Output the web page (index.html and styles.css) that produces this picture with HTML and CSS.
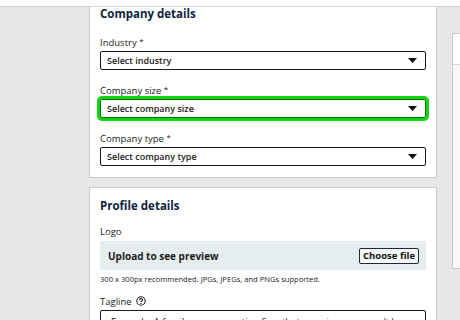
FILE: index.html
```html
<!DOCTYPE html>
<html lang="en">
<head>
    <meta charset="UTF-8">
    <meta name="viewport" content="width=device-width, initial-scale=1.0">
    <title>Company Page Setup</title>
    <link rel="stylesheet" href="styles.css">
</head>
<body>
<div class="topbar"></div>
<div class="page">
    <main class="main">
        <section class="card card-first">
            <h2>Company details</h2>

            <label class="field-label">Industry <span class="req">*</span></label>
            <div class="select">
                <span>Select industry</span>
                <svg class="caret" width="9" height="5" viewBox="0 0 9 5"><path d="M0 0h9L4.5 5z"/></svg>
            </div>

            <label class="field-label">Company size <span class="req">*</span></label>
            <div class="select select-focus">
                <span>Select company size</span>
                <svg class="caret" width="9" height="5" viewBox="0 0 9 5"><path d="M0 0h9L4.5 5z"/></svg>
            </div>

            <label class="field-label">Company type <span class="req">*</span></label>
            <div class="select">
                <span>Select company type</span>
                <svg class="caret" width="9" height="5" viewBox="0 0 9 5"><path d="M0 0h9L4.5 5z"/></svg>
            </div>
        </section>

        <section class="card">
            <h2>Profile details</h2>

            <label class="field-label">Logo</label>
            <div class="upload">
                <span class="upload-text">Upload to see preview</span>
                <button type="button" class="choose">Choose file</button>
            </div>
            <p class="hint">300 x 300px recommended. JPGs, JPEGs, and PNGs supported.</p>

            <label class="field-label">Tagline
                <svg class="help" width="10" height="10" viewBox="0 0 10 10">
                    <circle cx="5" cy="5" r="4.2" fill="none" stroke="#222" stroke-width="1.1"/>
                    <path d="M3.6 3.9a1.4 1.4 0 1 1 2 1.3c-.5.2-.6.5-.6.9" fill="none" stroke="#222" stroke-width="1.1"/>
                    <circle cx="5" cy="7.5" r=".65" fill="#222"/>
                </svg>
            </label>
            <div class="textarea">Example: A family-run accounting firm that promises you won't lose sleep over taxes.</div>
        </section>
    </main>
    <aside class="side">
        <div class="side-head"></div>
    </aside>
</div>
</body>
</html>
```

FILE: styles.css
```css
body {
    margin: 0;
    font-family: "Open Sans", "Noto Sans", sans-serif;
    background-color: #e7e7e7;
    color: #1c1c1c;
    overflow: hidden;
}

.topbar {
    height: 6px;
    background-color: #fff;
    border-bottom: 1px solid #d4d4d4;
}

.page {
    display: flex;
    align-items: flex-start;
    gap: 15px;
    padding-left: 89px;
}

.main {
    flex: 0 0 348px;
    display: flex;
    flex-direction: column;
    gap: 9px;
}

.card {
    background-color: #fff;
    border: 1px solid #c9c9c9;
    padding: 11px 10px 11px 10px;
}

.card-first {
    border-top: none;
    padding-top: 0;
}

h2 {
    margin: 0;
    font-size: 11.5px;
    line-height: 14px;
    font-weight: 700;
    color: #0d2340;
}

.field-label {
    display: block;
    margin-top: 12px;
    font-size: 9.5px;
    line-height: 14px;
    margin-bottom: 1px;
}

.card-first h2 + .field-label {
    margin-top: 13px;
}

.req {
    font-size: 8px;
    vertical-align: 2px;
}

.select {
    height: 17px;
    border: 1.5px solid #1a1a1a;
    border-radius: 2px;
    display: flex;
    align-items: center;
    justify-content: space-between;
    padding: 0 8px 0 6px;
    font-size: 9px;
    font-weight: 600;
}

.select-focus {
    border-color: #0b6f0b;
    box-shadow: 0 0 0 3px #13d613;
}

.caret {
    fill: #111;
}

.upload {
    margin-top: 2px;
    height: 29px;
    background-color: #e5edef;
    display: flex;
    align-items: center;
    justify-content: space-between;
    padding: 0 7px 0 8px;
}

.upload-text {
    font-size: 10px;
    font-weight: 700;
}

.choose {
    height: 16px;
    padding: 0 3px;
    font-family: inherit;
    font-size: 9.5px;
    font-weight: 700;
    color: #111;
    background-color: #f4f8f9;
    border: 1.5px solid #1b2a3a;
    border-radius: 2px;
}

.hint {
    margin: 3px 0 0;
    font-size: 7.6px;
    line-height: 12px;
}

.hint + .field-label {
    margin-top: 10px;
}

.help {
    vertical-align: -1px;
    margin-left: 2px;
}

.textarea {
    height: 46px;
    border: 1.5px solid #1a1a1a;
    border-radius: 2px;
    padding: 4px 10px;
    font-size: 9.5px;
    line-height: 14px;
}

.side {
    flex: 0 0 30px;
    margin-top: 26px;
    height: 234px;
    background-color: #f7f7f7;
    border: 1px solid #c9c9c9;
}

.side-head {
    height: 30px;
    background-color: #fff;
    border-bottom: 1px solid #d6d6d6;
}
```
